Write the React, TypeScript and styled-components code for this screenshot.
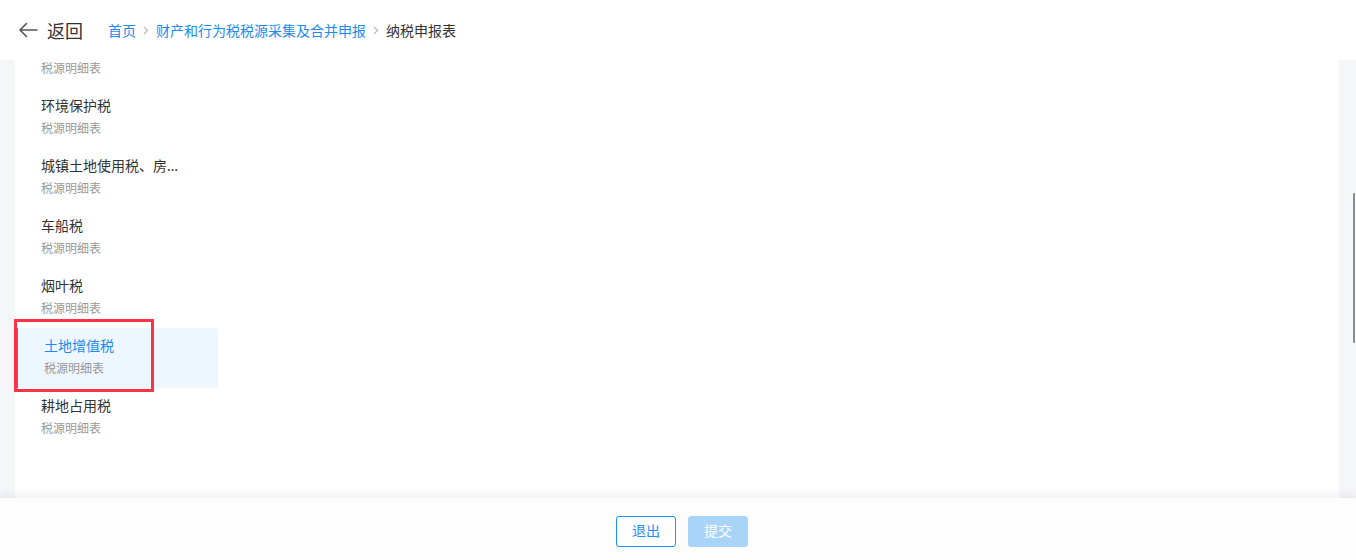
import React from 'react';
import styled, { createGlobalStyle } from 'styled-components';

const GlobalStyle = createGlobalStyle`
  html, body {
    margin: 0;
    padding: 0;
    background: #ffffff;
  }
  * {
    box-sizing: border-box;
  }
`;

const Page = styled.div`
  position: relative;
  width: 1356px;
  height: 560px;
  display: flex;
  flex-direction: column;
  overflow: hidden;
  font-family: "Noto Sans", "Noto Sans CJK SC", sans-serif;
  color: #333;
`;

const Header = styled.header`
  height: 60px;
  flex: none;
  display: flex;
  align-items: center;
  padding-left: 18px;
  background: #fff;
`;

const BackButton = styled.div`
  display: flex;
  align-items: center;
  gap: 9px;
  font-size: 18px;
  color: #333;
  cursor: pointer;
`;

const Crumbs = styled.nav`
  display: flex;
  align-items: center;
  margin-left: 25px;
  font-size: 14px;
`;

const Crumb = styled.span<{ $current?: boolean }>`
  color: ${(p) => (p.$current ? '#333' : '#1a8cf0')};
`;

const Sep = styled.span`
  display: inline-flex;
  width: 20px;
  justify-content: center;
  color: #bbb;
`;

const Main = styled.main`
  position: relative;
  flex: 1;
  display: flex;
  background: #f5f6f8;
  padding: 0 17px 0 15px;
  min-height: 0;
`;

const Content = styled.section`
  flex: 1;
  background: #fff;
  overflow: hidden;
`;

const Sidebar = styled.ul`
  list-style: none;
  margin: -32px 0 0 2px;
  padding: 0;
  width: 201px;
`;

const Item = styled.li<{ $active?: boolean }>`
  height: 60px;
  padding: 8px 30px 0 ${(p) => (p.$active ? '26px' : '24px')};
  border-left: ${(p) => (p.$active ? '1px solid #1890ff' : 'none')};
  border-radius: ${(p) => (p.$active ? '0 4px 4px 0' : '0')};
  background: ${(p) => (p.$active ? '#eef6ff' : 'transparent')};
`;

const ItemTitle = styled.div<{ $active?: boolean }>`
  font-size: 14px;
  line-height: 20px;
  max-width: 145px;
  white-space: nowrap;
  overflow: hidden;
  text-overflow: ellipsis;
  color: ${(p) => (p.$active ? '#1a8cf0' : '#333')};
`;

const ItemSub = styled.div`
  margin-top: 4px;
  font-size: 12px;
  line-height: 18px;
  color: #999;
`;

const ScrollThumb = styled.div`
  position: absolute;
  right: 1px;
  top: 133px;
  width: 2px;
  height: 150px;
  background: #8c8c8c;
  border-radius: 1px;
`;

const Footer = styled.footer`
  position: relative;
  height: 62px;
  flex: none;
  display: flex;
  justify-content: center;
  align-items: flex-start;
  gap: 12px;
  padding: 18px 0 0 8px;
  background: #fdfdfd;
  box-shadow: 0 -3px 8px rgba(120, 110, 160, 0.12);
`;

const Button = styled.button<{ $primary?: boolean }>`
  width: 60px;
  height: 31px;
  padding: 0 0 2px;
  border-radius: 3px;
  font-family: inherit;
  font-size: 14px;
  line-height: 1;
  cursor: pointer;
  border: 1px solid ${(p) => (p.$primary ? '#a9d4f9' : '#1890ff')};
  background: ${(p) => (p.$primary ? '#a9d4f9' : '#fff')};
  color: ${(p) => (p.$primary ? '#fff' : '#1890ff')};
`;

const Highlight = styled.div`
  position: absolute;
  left: 14px;
  top: 319px;
  width: 140px;
  height: 73px;
  border: 3px solid #ff3347;
  pointer-events: none;
`;

const ArrowLeft = () => (
  <svg width="20" height="16" viewBox="0 0 20 16" fill="none">
    <path d="M19 8H2M8.5 1.5L2 8l6.5 6.5" stroke="#555" strokeWidth="1.6" strokeLinecap="round" strokeLinejoin="round" />
  </svg>
);

const Chevron = () => (
  <svg width="6" height="9" viewBox="0 0 6 9" fill="none">
    <path d="M1 1l3.5 3.5L1 8" stroke="#bbb" strokeWidth="1.2" />
  </svg>
);

const items = [
  { title: '资源税', sub: '税源明细表' },
  { title: '环境保护税', sub: '税源明细表' },
  { title: '城镇土地使用税、房产税', sub: '税源明细表' },
  { title: '车船税', sub: '税源明细表' },
  { title: '烟叶税', sub: '税源明细表' },
  { title: '土地增值税', sub: '税源明细表', active: true },
  { title: '耕地占用税', sub: '税源明细表' },
];

const App: React.FC = () => {
  return (
    <Page>
      <GlobalStyle />
      <Header>
        <BackButton>
          <ArrowLeft />
          <span>返回</span>
        </BackButton>
        <Crumbs>
          <Crumb>首页</Crumb>
          <Sep><Chevron /></Sep>
          <Crumb>财产和行为税税源采集及合并申报</Crumb>
          <Sep><Chevron /></Sep>
          <Crumb $current>纳税申报表</Crumb>
        </Crumbs>
      </Header>
      <Main>
        <Content>
          <Sidebar>
            {items.map((it) => (
              <Item key={it.title} $active={it.active}>
                <ItemTitle $active={it.active}>{it.title}</ItemTitle>
                <ItemSub>{it.sub}</ItemSub>
              </Item>
            ))}
          </Sidebar>
        </Content>
        <ScrollThumb />
      </Main>
      <Footer>
        <Button>退出</Button>
        <Button $primary disabled>提交</Button>
      </Footer>
      <Highlight />
    </Page>
  );
};

export default App;
